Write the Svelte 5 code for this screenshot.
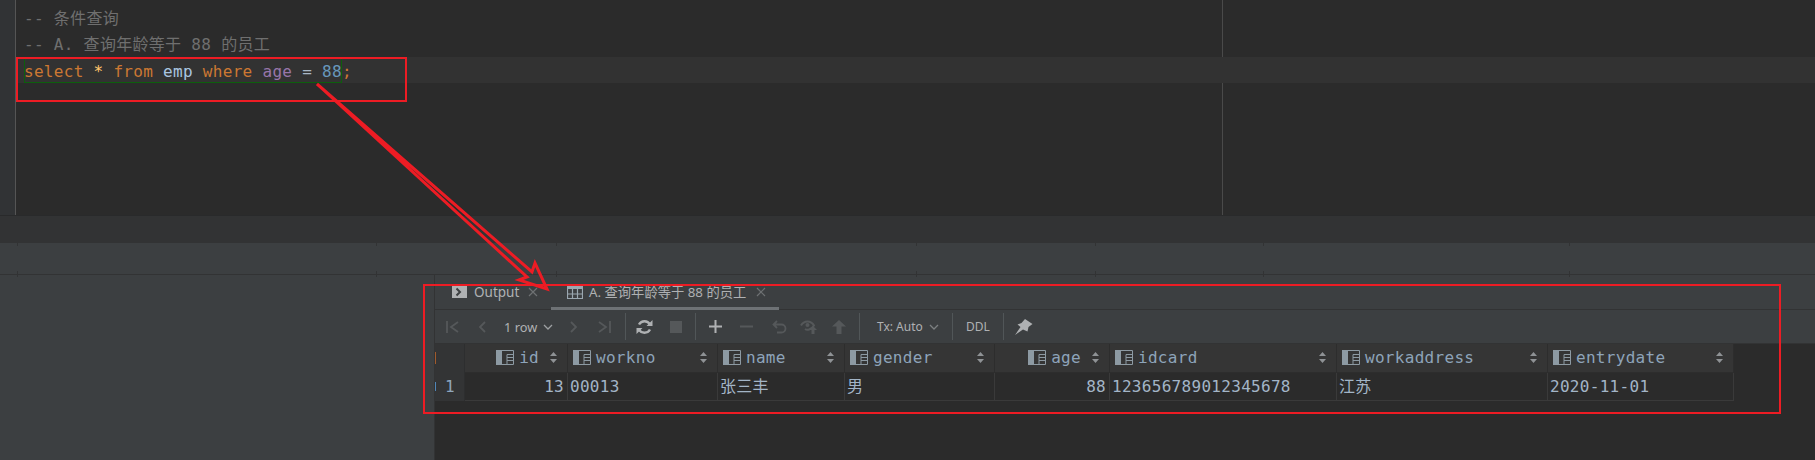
<script>
  const columns = [
    { name: 'id', width: 103, end: true },
    { name: 'workno', width: 150 },
    { name: 'name', width: 127 },
    { name: 'gender', width: 150 },
    { name: 'age', width: 115, end: true },
    { name: 'idcard', width: 227 },
    { name: 'workaddress', width: 211 },
    { name: 'entrydate', width: 186 }
  ];
  const row = ['13', '00013', '张三丰', '男', '88', '123656789012345678', '江苏', '2020-11-01'];
  const ticks = [17, 376, 556, 916, 1095, 1263, 1569];
</script>

<main>
  <section class="editor">
    <div class="gutter"></div>
    <div class="code">
      <div class="line comment">-- 条件查询</div>
      <div class="line comment">-- A. 查询年龄等于 88 的员工</div>
      <div class="line current">
        <span class="stmt"><span class="kw">select</span> <span class="star">*</span> <span class="kw">from</span> <span class="tbl">emp</span> <span class="kw">where</span> <span class="col">age</span> <span class="op">=</span> <span class="num">88</span></span><span class="kw semi">;</span>
      </div>
    </div>
  </section>

  <div class="statusbar"></div>
  <div class="strip">
    {#each ticks as x}
      <i class="tick top" style="left: {x}px"></i>
      <i class="tick" style="left: {x}px"></i>
    {/each}
  </div>

  <div class="lower">
    <div class="side"></div>
    <div class="results">
      <div class="tabs">
        <div class="tab output">
          <svg width="15" height="12" viewBox="0 0 15 12"><rect width="15" height="12" fill="#afb1b3"/><path d="M4.500 2.500 8 6l-3.500 3.500" fill="none" stroke="#3c3f41" stroke-width="2"/></svg>
          <span>Output</span>
          <svg class="close" width="10" height="10" viewBox="0 0 10 10"><path d="M1 1l8 8M9 1l-8 8" stroke="#6e7173" stroke-width="1.200"/></svg>
        </div>
        <div class="tab active">
          <svg width="16" height="14" viewBox="0 0 16 14"><rect width="16" height="4" fill="#9aa7b0"/><path d="M.5.500h15v13H.500zM.5 9h15M5.500 4v9.500M10.500 4v9.500" fill="none" stroke="#9aa7b0" stroke-width="1.200"/></svg>
          <span class="title">A. 查询年龄等于 88 的员工</span>
          <svg class="close" width="10" height="10" viewBox="0 0 10 10"><path d="M1 1l8 8M9 1l-8 8" stroke="#6e7173" stroke-width="1.200"/></svg>
        </div>
      </div>

      <div class="toolbar">
        <svg class="first" width="14" height="12" viewBox="0 0 14 12"><path d="M1 0v12M12 1 5 6l7 5" fill="none" stroke="#55585a" stroke-width="1.800"/></svg>
        <svg class="prev" width="9" height="12" viewBox="0 0 9 12"><path d="M7 1 2 6l5 5" fill="none" stroke="#55585a" stroke-width="1.800"/></svg>
        <span class="rows">1 row</span>
        <svg class="chev" width="10" height="6" viewBox="0 0 10 6"><path d="m1 1 4 4 4-4" fill="none" stroke="#9da0a2" stroke-width="1.300"/></svg>
        <svg class="next" width="9" height="12" viewBox="0 0 9 12"><path d="m2 1 5 5-5 5" fill="none" stroke="#55585a" stroke-width="1.800"/></svg>
        <svg class="last" width="14" height="12" viewBox="0 0 14 12"><path d="M13 0v12M2 1l7 5-7 5" fill="none" stroke="#55585a" stroke-width="1.800"/></svg>
        <i class="sep s1"></i>
        <svg class="reload" width="17" height="16" viewBox="0 0 17 16"><path d="M14 5.500A6.300 6.300 0 0 0 3 5.500M3 10.500a6.300 6.300 0 0 0 11 0" fill="none" stroke="#afb1b3" stroke-width="2.400"/><path d="M16.500 1v6H10.500zM.5 15V9h6z" fill="#afb1b3"/></svg>
        <i class="stop"></i>
        <i class="sep s2"></i>
        <svg class="plus" width="13" height="13" viewBox="0 0 13 13"><path d="M6.500 0v13M0 6.500h13" stroke="#afb1b3" stroke-width="2"/></svg>
        <svg class="minus" width="13" height="13" viewBox="0 0 13 13"><path d="M0 6.500h13" stroke="#55585a" stroke-width="2"/></svg>
        <svg class="undo" width="15" height="14" viewBox="0 0 15 14"><path d="M5 1 1.500 4.500 5 8M2 4.500h7.500a4 4 0 0 1 0 8H5" fill="none" stroke="#55585a" stroke-width="1.800"/></svg>
        <svg class="eye" width="18" height="15" viewBox="0 0 18 15"><path d="M1 6.500C4 1 11 1 14 6.500 11 11 7 11.500 5 10" fill="none" stroke="#55585a" stroke-width="2"/><circle cx="7.500" cy="6" r="2" fill="#55585a"/><path d="m13 7 4 4h-2.500v4h-3v-4H9z" fill="#55585a"/></svg>
        <svg class="up" width="14" height="14" viewBox="0 0 14 14"><path d="M7 0l7 6.500H9.500V14h-5V6.500H0z" fill="#55585a"/></svg>
        <i class="sep s3"></i>
        <span class="tx">Tx: Auto</span>
        <svg class="chev" width="10" height="6" viewBox="0 0 10 6"><path d="m1 1 4 4 4-4" fill="none" stroke="#7c7f81" stroke-width="1.300"/></svg>
        <i class="sep s4"></i>
        <span class="ddl">DDL</span>
        <i class="sep s5"></i>
        <svg class="pin" width="19" height="18" viewBox="0 0 19 18"><path d="M11 1 18.500 6 14.500 9 13.500 13.500 9 11.500 1 17 6.500 9 3.500 6.500 7.500 5z" fill="#afb1b3"/></svg>
      </div>

      <div class="grid">
        <div class="gridrow head">
          <div class="rownum"></div>
          {#each columns as c}
            <div class="th" class:end={c.end} style="width: {c.width}px">
              <svg class="colicon" width="18" height="15" viewBox="0 0 18 15"><rect width="6" height="15" fill="#8d9aa3"/><path d="M6 .5h11.500v14H6M11 4.500h6.500M11 7.500h6.500M11 10.500h6.500M11 4.500v10" fill="none" stroke="#8d9aa3"/></svg>
              <span class="cname">{c.name}</span>
              <svg class="sort" width="7" height="11" viewBox="0 0 7 11"><path d="M3.500 0 7 4H0zM3.500 11 0 7h7z" fill="#8f9295"/></svg>
            </div>
          {/each}
        </div>
        <div class="gridrow body">
          <div class="rownum">1</div>
          {#each columns as c, i}
            <div class="td" class:end={c.end} style="width: {c.width}px">{row[i]}</div>
          {/each}
        </div>
      </div>
    </div>
  </div>

  <svg class="marks" width="1815" height="460" viewBox="0 0 1815 460">
    <rect x="17" y="58" width="389" height="43" fill="none" stroke="#ed1c24" stroke-width="2"/>
    <rect x="424" y="285" width="1356" height="128" fill="none" stroke="#ed1c24" stroke-width="2"/>
    <path d="M317 84 532 272 535 263 547 289 519 280 527 277z" fill="none" stroke="#ed1c24" stroke-width="3"/>
  </svg>
</main>

<style>
  :global(body) {
    margin: 0;
    background: #2b2b2b;
  }
  main {
    position: relative;
    width: 1815px;
    height: 460px;
    overflow: hidden;
    display: flex;
    flex-direction: column;
    font-family: "DejaVu Sans Mono", "Noto Sans CJK SC", monospace;
  }
  .editor {
    height: 216px;
    display: flex;
    background: #2b2b2b;
    background-image: linear-gradient(#4a4a4a, #4a4a4a);
    background-size: 1px 100%;
    background-position: 1222px 0;
    background-repeat: no-repeat;
    border-bottom: 1px solid #292a2b;
    box-sizing: border-box;
  }
  .gutter {
    width: 15px;
    background: #313335;
    border-right: 1px solid #555;
  }
  .code {
    flex: 1;
    padding-top: 5px;
  }
  .line {
    height: 26px;
    line-height: 29px;
    padding-left: 8px;
    font-size: 16px;
    letter-spacing: 0.3px;
    white-space: pre;
    color: #a9b7c6;
  }
  .comment {
    color: #6f6f6f;
    line-height: 27px;
  }
  .current {
    background: #323232;
  }
  .stmt {
    display: inline-block;
    vertical-align: top;
    height: 26px;
    outline: 1px solid #0d5f0d;
    outline-offset: -1px;
  }
  .semi {
    display: inline-block;
    vertical-align: top;
  }
  .kw { color: #cc7832; }
  .star { color: #ffc66d; }
  .tbl { color: #a9c5e0; }
  .col { color: #9876aa; }
  .op { color: #a9b7c6; }
  .num { color: #6897bb; }

  .statusbar {
    height: 27px;
    background: #323334;
  }
  .strip {
    position: relative;
    height: 32px;
    box-sizing: border-box;
    background: #3c3f41;
    border-bottom: 1px solid #323334;
  }
  .tick {
    position: absolute;
    bottom: -3px;
    width: 1px;
    height: 6px;
    background: #323334;
  }
  .tick.top {
    bottom: auto;
    top: 0;
    height: 3px;
  }
  .lower {
    flex: 1;
    display: flex;
    min-height: 0;
  }
  .side {
    width: 434px;
    background: #3c3f41;
    border-right: 1px solid #323334;
  }
  .results {
    flex: 1;
    background: #2b2b2b;
  }
  .tabs {
    height: 35px;
    box-sizing: border-box;
    display: flex;
    background: #3c3f41;
    border-bottom: 1px solid #323334;
    font-family: "Noto Sans", "Noto Sans CJK SC", sans-serif;
    font-size: 13.500px;
    color: #afb1b3;
  }
  .tab {
    display: flex;
    align-items: center;
    height: 34px;
    box-sizing: border-box;
    flex: none;
  }
  .output {
    width: 116px;
    padding-left: 17px;
    gap: 7px;
  }
  .output .close {
    margin-left: 2px;
  }
  .active {
    width: 228px;
    height: 35px;
    padding-left: 16px;
    padding-top: 1px;
    gap: 6px;
    border-bottom: 3px solid #6e7275;
  }
  .title {
    font-size: 13.300px;
  }
  .active .close {
    margin-left: 4px;
  }
  .toolbar {
    height: 34px;
    box-sizing: border-box;
    display: flex;
    align-items: center;
    background: #3c3f41;
    border-bottom: 1px solid #323334;
    font-family: "Noto Sans", sans-serif;
    font-size: 12.800px;
    color: #afb1b3;
  }
  .toolbar svg, .toolbar i, .toolbar span {
    flex: none;
  }
  .first { margin-left: 11px; }
  .prev { margin-left: 18px; }
  .rows { margin-left: 17px; width: 33px; white-space: nowrap; }
  .toolbar .chev { margin-left: 6px; }
  .next { margin-left: 16px; }
  .last { margin-left: 19px; }
  .sep {
    display: block;
    width: 1px;
    height: 27px;
    background: #515658;
  }
  .s1 { margin-left: 14px; }
  .reload { margin-left: 10px; }
  .stop {
    display: block;
    width: 12px;
    height: 12px;
    margin-left: 17px;
    background: #55585a;
  }
  .s2 { margin-left: 13px; }
  .plus { margin-left: 13px; }
  .minus { margin-left: 18px; }
  .undo { margin-left: 19px; }
  .eye { margin-left: 13px; }
  .up { margin-left: 14px; }
  .s3 { margin-left: 13px; }
  .tx { margin-left: 17px; width: 46px; font-size: 12px; white-space: nowrap; }
  .s4 { margin-left: 13px; }
  .ddl { margin-left: 13px; width: 23px; font-size: 12px; }
  .s5 { margin-left: 14px; }
  .pin { margin-left: 10px; }

  .grid {
    font-size: 16px;
    letter-spacing: 0.3px;
    color: #a9b7c6;
  }
  .gridrow {
    display: flex;
  }
  .head {
    height: 29px;
  }
  .body {
    height: 28px;
  }
  .rownum {
    width: 30px;
    flex: none;
    box-sizing: border-box;
    background: #333435;
    border-right: 1px solid #2d2e2f;
    padding-left: 10px;
    line-height: 28px;
    color: #8fa6bd;
  }
  .head .rownum {
    background: linear-gradient(#a05a2c, #a05a2c) 0 8px / 1px 12px no-repeat, #333435;
  }
  .body .rownum {
    background: linear-gradient(#4f86b8, #4f86b8) 0 9px / 1px 9px no-repeat, #333435;
  }
  .th {
    flex: none;
    box-sizing: border-box;
    display: flex;
    align-items: center;
    padding: 0 10px 1px 5px;
    gap: 5px;
    background: #353535;
    border-right: 1px solid #2d2d2d;
    border-bottom: 1px solid #2d2d2d;
  }
  .th.end .colicon {
    margin-left: auto;
  }
  .th .sort {
    margin-left: auto;
    flex: none;
  }
  .th.end .sort {
    margin-left: 6px;
  }
  .cname {
    color: #8ea4ba;
  }
  .td {
    flex: none;
    box-sizing: border-box;
    padding: 0 2px;
    line-height: 28px;
    height: 28px;
    background: #2b2b2b;
    border-right: 1px solid #3a3a3a;
    border-bottom: 1px solid #3a3a3a;
    color: #a3b5c7;
    white-space: nowrap;
  }
  .td.end {
    text-align: right;
    padding-right: 3px;
  }
  .marks {
    position: absolute;
    left: 0;
    top: 0;
    pointer-events: none;
  }
</style>
